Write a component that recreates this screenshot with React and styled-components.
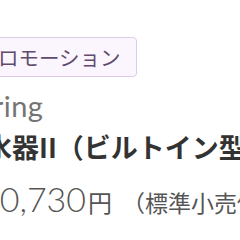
import React from "react";
import styled, { createGlobalStyle } from "styled-components";

const Global = createGlobalStyle`
  html, body { margin: 0; padding: 0; background: #ffffff; }
  body { width: 240px; height: 240px; overflow: hidden; }
`;

const Page = styled.div`
  width: 240px;
  height: 240px;
  overflow: hidden;
  background: #fff;
`;

const Content = styled.div`
  display: flex;
  flex-direction: column;
  align-items: flex-start;
  margin-left: -40px;
  padding-top: 37px;
  white-space: nowrap;
  font-family: "Noto Sans CJK JP", "Noto Sans", sans-serif;
`;

const Badge = styled.span`
  display: inline-flex;
  align-items: center;
  height: 38px;
  padding: 0 15px 0 16.5px;
  border: 1px solid #dccde6;
  border-radius: 4px;
  background: #fbf6fd;
  color: #5f4b6e;
  font-size: 20.5px;
  line-height: 1;
`;

const Brand = styled.div`
  margin-top: 12px;
  margin-left: ${(p) => p.$shift}px;
  font-family: "Lato", "Noto Sans", sans-serif;
  font-size: 29px;
  line-height: 34px;
  color: #747474;
  letter-spacing: 0.5px;
`;

const Title = styled.h1`
  margin: 6px 0 0;
  margin-left: ${(p) => p.$shift}px;
  font-size: 27px;
  line-height: 36px;
  font-weight: 700;
  color: #333;
`;

const PriceRow = styled.div`
  display: flex;
  align-items: baseline;
  margin-top: 14px;
  margin-left: ${(p) => p.$shift}px;
  color: #555;
`;

const Amount = styled.span`
  font-family: "Lato", "Noto Sans", sans-serif;
  font-weight: 300;
  font-size: 34px;
  line-height: 40px;
`;

const Yen = styled.span`
  font-size: 24px;
  font-weight: 400;
  margin-left: 2px;
`;

const Note = styled.span`
  font-size: 23px;
  margin-left: 10px;
  color: #555;
`;

export default function App() {
  return (
    <Page>
      <Global />
      <Content>
        <Badge>プロモーション</Badge>
        <Brand $shift={0}>Spring</Brand>
        <Title $shift={-2}>浄水器II（ビルトイン型）</Title>
        <PriceRow $shift={20}>
          <Amount>10,730</Amount>
          <Yen>円</Yen>
          <Note>（標準小売価格）</Note>
        </PriceRow>
      </Content>
    </Page>
  );
}
